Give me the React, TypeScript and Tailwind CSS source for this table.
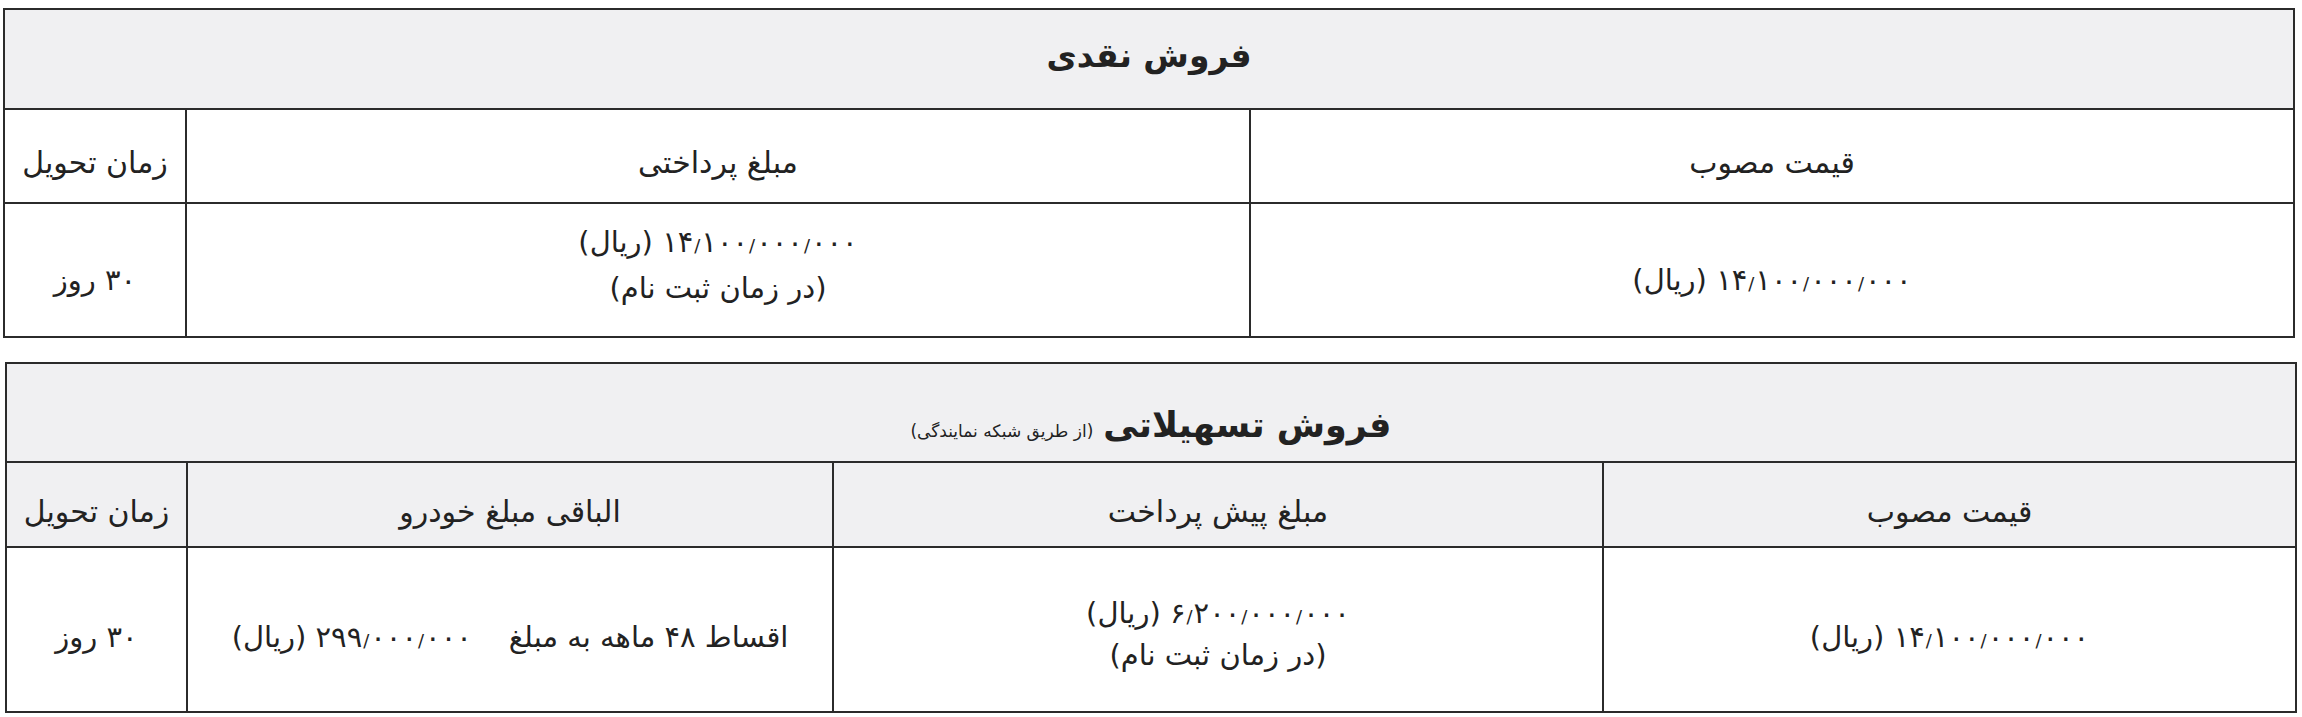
const font = { fontFamily: '"DejaVu Sans", "Noto Sans", sans-serif' };

// small slanted group separator like the reference's Persian font
const Sep = () => <span className="text-[0.62em] mx-[1px]">/</span>;

const Num = ({ groups }: { groups: string[] }) => (
  <>
    {groups.map((g, i) => (
      <span key={i}>
        {i > 0 && <Sep />}
        {g}
      </span>
    ))}
  </>
);

const Price = () => (
  <>
    <Num groups={["۱۴", "۱۰۰", "۰۰۰", "۰۰۰"]} /> (ریال)
  </>
);

const cell = "border-2 border-[#2b2b2b] text-center align-middle text-[#222]";

export default function App() {
  return (
    <div dir="rtl" className="bg-white w-[2302px] h-[717px] pt-[8px] pr-[7px] pl-[5px]" style={font}>
      {/* فروش نقدی */}
      <table className="w-[2290px] border-collapse table-fixed">
        <colgroup>
          <col className="w-[1044px]" />
          <col className="w-[1064px]" />
          <col className="w-[182px]" />
        </colgroup>
        <tbody>
          <tr className="h-[100px] bg-[#f0f0f2]">
            <td colSpan={3} className={`${cell} text-[33px] font-bold pb-[6px]`}>فروش نقدی</td>
          </tr>
          <tr className="h-[94px] text-[30px]">
            <td className={`${cell} pt-[12px]`}>قیمت مصوب</td>
            <td className={`${cell} pt-[12px]`}>مبلغ پرداختی</td>
            <td className={`${cell} pt-[12px]`}>زمان تحویل</td>
          </tr>
          <tr className="h-[134px] text-[29px]">
            <td className={`${cell} pt-[22px]`}>
              <Price />
            </td>
            <td className={`${cell} leading-[42px] pb-[10px]`}>
              <div>
                <Price />
              </div>
              <div>(در زمان ثبت نام)</div>
            </td>
            <td className={`${cell} pt-[22px]`}>۳۰ روز</td>
          </tr>
        </tbody>
      </table>

      {/* فروش تسهیلاتی */}
      <table className="w-[2290px] border-collapse table-fixed mt-[24px] mr-[-2px]">
        <colgroup>
          <col className="w-[693px]" />
          <col className="w-[770px]" />
          <col className="w-[646px]" />
          <col className="w-[181px]" />
        </colgroup>
        <tbody>
          <tr className="h-[99px] bg-[#f0f0f2]">
            <td colSpan={4} className={`${cell} pt-[26px]`}>
              <span className="text-[35px] font-bold">فروش تسهیلاتی</span>
              <span className="text-[17px] mr-[10px]">(از طریق شبکه نمایندگی)</span>
            </td>
          </tr>
          <tr className="h-[85px] bg-[#f0f0f2] text-[30px]">
            <td className={`${cell} pt-[14px]`}>قیمت مصوب</td>
            <td className={`${cell} pt-[14px]`}>مبلغ پیش پرداخت</td>
            <td className={`${cell} pt-[14px]`}>الباقی مبلغ خودرو</td>
            <td className={`${cell} pt-[14px]`}>زمان تحویل</td>
          </tr>
          <tr className="h-[165px] text-[29px]">
            <td className={`${cell} pt-[16px]`}>
              <Price />
            </td>
            <td className={`${cell} leading-[38px] pt-[8px]`}>
              <div>
                <Num groups={["۶", "۲۰۰", "۰۰۰", "۰۰۰"]} /> (ریال)
              </div>
              <div>(در زمان ثبت نام)</div>
            </td>
            <td className={`${cell} pt-[16px] whitespace-pre`}>
              {"اقساط ۴۸ ماهه به مبلغ    "}
              <Num groups={["۲۹۹", "۰۰۰", "۰۰۰"]} /> (ریال)
            </td>
            <td className={`${cell} pt-[16px]`}>۳۰ روز</td>
          </tr>
        </tbody>
      </table>
    </div>
  );
}
